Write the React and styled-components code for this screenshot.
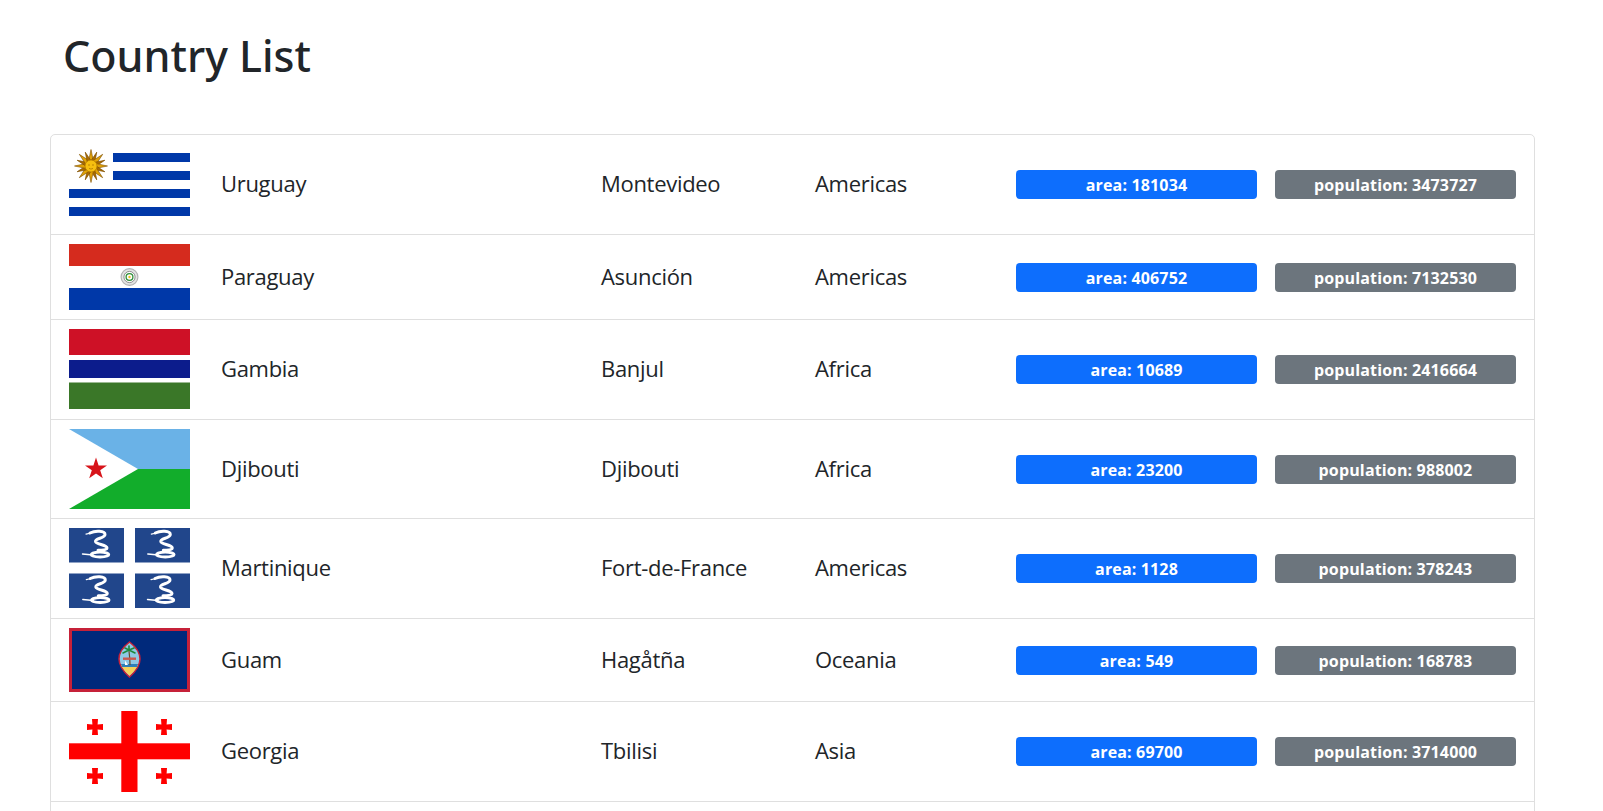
import React from "react";
import styled, { createGlobalStyle } from "styled-components";

const GlobalStyle = createGlobalStyle`
  html, body {
    margin: 0;
    height: 100%;
    overflow: hidden;
    background: #fff;
  }
  body {
    font-family: "Open Sans", "Noto Sans", "Liberation Sans", sans-serif;
    color: #212529;
  }
`;

const Page = styled.div`
  padding: 0 68px 0 50px;
`;

const Title = styled.h1`
  margin: 0;
  padding: 26px 0 0 13px;
  height: 134px;
  box-sizing: border-box;
  font-size: 43px;
  line-height: 60px;
  font-weight: 500;
  font-family: "Noto Sans", sans-serif;
`;

const List = styled.ul`
  list-style: none;
  margin: 0;
  padding: 0;
  border: 1px solid #dfdfdf;
  border-radius: 5px;
  min-height: 800px;
`;

const Row = styled.li`
  display: grid;
  grid-template-columns: 152px 380px 214px 201px 1fr;
  align-items: center;
  padding: 9px 18px;
  border-bottom: 1px solid #dfdfdf;
  font-size: 22px;
  letter-spacing: -0.3px;
  line-height: 33px;
`;

const Cell = styled.span`
  padding-bottom: 2px;
`;

const Badges = styled.div`
  display: grid;
  grid-template-columns: 1fr 1fr;
  gap: 18px;
`;

const Badge = styled.span`
  height: 29px;
  line-height: 30px;
  border-radius: 4px;
  text-align: center;
  color: #fff;
  font-size: 16px;
  font-weight: 700;
  letter-spacing: 0.15px;
  background: ${(p) => (p.$tone === "blue" ? "#0d6efd" : "#6c757d")};
`;

const FlagSvg = styled.svg`
  display: block;
  width: 121px;
`;

function Flag({ h, children }) {
  return (
    <FlagSvg viewBox={`0 0 121 ${h}`} height={h}>
      {children}
    </FlagSvg>
  );
}

function Uruguay() {
  const rays = Array.from({ length: 16 }, (_, i) => i * 22.5);
  return (
    <Flag h={81}>
      <rect width="121" height="81" fill="#fff" />
      <rect x="44" y="9" width="77" height="9" fill="#0038a8" />
      <rect x="44" y="27" width="77" height="9" fill="#0038a8" />
      <rect y="45" width="121" height="9" fill="#0038a8" />
      <rect y="63" width="121" height="9" fill="#0038a8" />
      <g transform="translate(22 22)">
        {rays.map((a, i) => (
          <polygon
            key={a}
            points={i % 2 ? "-2,-5 0,-15 2,-5" : "-2.4,-5 0,-16.5 2.4,-5"}
            transform={`rotate(${a})`}
            fill={i % 2 ? "#a86a00" : "#e0a206"}
            stroke="#7f4f00"
            strokeWidth="0.6"
          />
        ))}
        <circle r="6" fill="#f6bf10" stroke="#b37a00" strokeWidth="0.7" />
        <circle cx="-2" cy="-1" r="0.7" fill="#a86f00" />
        <circle cx="2" cy="-1" r="0.7" fill="#a86f00" />
        <path d="M-2 2.4 Q0 3.8 2 2.4" fill="none" stroke="#a86f00" strokeWidth="0.7" />
      </g>
    </Flag>
  );
}

function Paraguay() {
  return (
    <Flag h={66}>
      <rect width="121" height="22" fill="#d52b1e" />
      <rect y="22" width="121" height="22" fill="#fff" />
      <rect y="44" width="121" height="22" fill="#0038a8" />
      <circle cx="60.5" cy="33" r="8.4" fill="#e4e4e4" stroke="#b4b4b4" strokeWidth="1.2" />
      <circle cx="60.5" cy="33" r="5.6" fill="#fff" stroke="#777" strokeWidth="0.8" />
      <circle cx="60.5" cy="33" r="3.4" fill="#fff" stroke="#2f8f3a" strokeWidth="1.3" />
      <circle cx="60.5" cy="33" r="1.2" fill="#f0c419" />
    </Flag>
  );
}

function Gambia() {
  return (
    <Flag h={81}>
      <rect width="121" height="81" fill="#fff" />
      <rect width="121" height="26" fill="#ce1126" />
      <rect y="31" width="121" height="18" fill="#0c1c8c" />
      <rect y="53.5" width="121" height="26.5" fill="#3a7728" />
    </Flag>
  );
}

function Djibouti() {
  return (
    <Flag h={80}>
      <rect width="121" height="40" fill="#6ab2e7" />
      <rect y="40" width="121" height="40" fill="#12ad2b" />
      <polygon points="0,0 69,40 0,80" fill="#fff" />
      <polygon
        points="27,28.5 29.6,36.4 38,36.4 31.2,41.3 33.8,49.3 27,44.4 20.2,49.3 22.8,41.3 16,36.4 24.4,36.4"
        fill="#d7141a"
      />
    </Flag>
  );
}

const snake =
  "M21 5 C26 2.5 36 2.5 36 6.5 C36 10.5 26 10 26.5 13.5 C27 16.5 38 16.5 38 20 C38 21.8 33 22.3 29 22.3";

function SnakePanel({ x, y, shift }) {
  return (
    <g transform={`translate(${x} ${y})`}>
      <rect width="55" height="34.5" fill="#21468b" />
      <g fill="none" stroke="#fff" strokeWidth="3" strokeLinecap="round" transform={`translate(${shift} 0)`}>
        <path d={snake} />
        <ellipse cx="31" cy="26.6" rx="8.8" ry="2.4" strokeWidth="2.8" />
        <path d="M24 27 L13.5 26" strokeWidth="1.4" />
        <path d="M22 5 L17 6.2" strokeWidth="1.2" />
      </g>
    </g>
  );
}

function Martinique() {
  return (
    <Flag h={81}>
      <rect width="121" height="81" fill="#fff" />
      <SnakePanel x={0} y={0} shift={0} />
      <SnakePanel x={66} y={0} shift={-0.7} />
      <SnakePanel x={0} y={45.5} shift={0.3} />
      <SnakePanel x={66} y={45.5} shift={-1} />
    </Flag>
  );
}

function Guam() {
  return (
    <Flag h={64}>
      <rect width="121" height="64" fill="#c62139" />
      <rect x="3" y="3" width="115" height="58" fill="#00297b" />
      <path d="M60.5 14 C67 19 71 25 71 31 C71 38 66 44 60.5 49 C55 44 50 38 50 31 C50 25 54 19 60.5 14 Z" fill="#8ec9e5" stroke="#c62139" strokeWidth="1.5" />
      <path d="M52 37 L69 37 C67 41 64 45 60.5 47.5 C57 45 54 41 52 37 Z" fill="#f5d25a" />
      <path d="M52 36 L69 36 L68 39 L53 39 Z" fill="#2e7fb8" />
      <path d="M61 37 C61 31 60.5 27 60 23" fill="none" stroke="#6b4a2a" strokeWidth="1.2" />
      <path d="M60 22 L54 25 M60 22 L56 20 M60 22 L60 18 M60 22 L65 20 M60 22 L66 25" stroke="#1e8a3c" strokeWidth="1.6" strokeLinecap="round" />
      <rect x="54" y="29.5" width="13" height="2.4" fill="#c9574f" />
      <polygon points="56,37 56,32.5 59,37" fill="#fff" />
    </Flag>
  );
}

function SmallCross({ x, y }) {
  return (
    <path
      transform={`translate(${x} ${y})`}
      d="M-3 -8 H3 L2.6 -2.6 L8 -3 V3 L2.6 2.6 L3 8 H-3 L-2.6 2.6 L-8 3 V-3 L-2.6 -2.6 Z"
      fill="#f00"
    />
  );
}

function Georgia() {
  return (
    <Flag h={81}>
      <rect width="121" height="81" fill="#fff" />
      <rect x="52.3" width="16.2" height="81" fill="#f00" />
      <rect y="32.3" width="121" height="16" fill="#f00" />
      <SmallCross x={26} y={16} />
      <SmallCross x={95} y={16} />
      <SmallCross x={26} y={65} />
      <SmallCross x={95} y={65} />
    </Flag>
  );
}

const countries = [
  { flag: Uruguay, name: "Uruguay", capital: "Montevideo", region: "Americas", area: 181034, population: 3473727 },
  { flag: Paraguay, name: "Paraguay", capital: "Asunción", region: "Americas", area: 406752, population: 7132530 },
  { flag: Gambia, name: "Gambia", capital: "Banjul", region: "Africa", area: 10689, population: 2416664 },
  { flag: Djibouti, name: "Djibouti", capital: "Djibouti", region: "Africa", area: 23200, population: 988002 },
  { flag: Martinique, name: "Martinique", capital: "Fort-de-France", region: "Americas", area: 1128, population: 378243 },
  { flag: Guam, name: "Guam", capital: "Hagåtña", region: "Oceania", area: 549, population: 168783 },
  { flag: Georgia, name: "Georgia", capital: "Tbilisi", region: "Asia", area: 69700, population: 3714000 },
];

export default function App() {
  return (
    <Page>
      <GlobalStyle />
      <Title>Country List</Title>
      <List>
        {countries.map((c) => (
          <Row key={c.name}>
            <c.flag />
            <Cell>{c.name}</Cell>
            <Cell>{c.capital}</Cell>
            <Cell>{c.region}</Cell>
            <Badges>
              <Badge $tone="blue">area: {c.area}</Badge>
              <Badge $tone="grey">population: {c.population}</Badge>
            </Badges>
          </Row>
        ))}
      </List>
    </Page>
  );
}
